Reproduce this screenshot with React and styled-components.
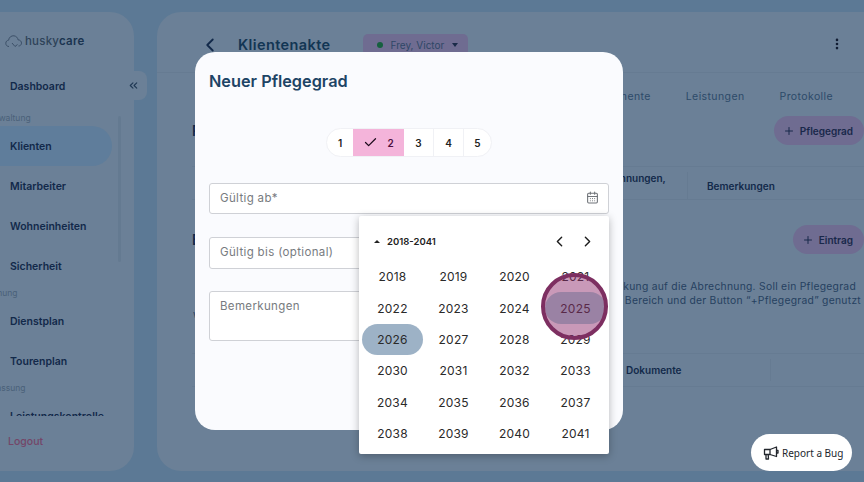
import React from "react";
import styled, { createGlobalStyle } from "styled-components";
import { CalendarDays, ChevronLeft, ChevronRight, ChevronsLeft, Check, Plus, EllipsisVertical } from "lucide-react";

const Global = createGlobalStyle`
  html, body { margin: 0; padding: 0; background: #5c7995; }
  body { font-family: "Inter", "Noto Sans", sans-serif; }
`;

const Page = styled.div`
  position: relative;
  width: 864px;
  height: 482px;
  overflow: hidden;
  display: flex;
  gap: 23px;
  padding: 12px 0 11px;
  box-sizing: border-box;
  background: #5c7995;
  color: #14304f;
`;

const Sidebar = styled.aside`
  flex: 0 0 158px;
  margin-left: -24px;
  position: relative;
  background: #6b8097;
  border-radius: 24px;
  display: flex;
  flex-direction: column;
`;

const Logo = styled.div`
  height: 54px;
  padding: 3px 0 0 29px;
  box-sizing: border-box;
  display: flex;
  align-items: center;
  gap: 2px;
  font-size: 11.5px;
  letter-spacing: 0.2px;
  font-weight: 500;
  color: #2e4359;
  & b {
    font-weight: 600;
    color: #1a3450;
  }
`;

const Nav = styled.nav`
  height: 350px;
  overflow: hidden;
`;

const SectionLabel = styled.div`
  height: 15px;
  margin-top: ${(p) => (p.$first ? "5px" : "0")};
  line-height: 15px;
  padding-left: ${(p) => p.$inset}px;
  font-size: 8.5px;
  color: #4a6079;
  white-space: nowrap;
`;

const NavItem = styled.div`
  height: 40px;
  width: 136px;
  padding-left: 34px;
  box-sizing: border-box;
  display: flex;
  align-items: center;
  font-size: 10.5px;
  font-weight: 600;
  color: #12294a;
  border-radius: 0 20px 20px 0;
  background: ${(p) => (p.$active ? "#5f7d9b" : "transparent")};
`;

const Logout = styled.div`
  margin-top: 19px;
  padding-left: 32px;
  font-size: 10.5px;
  font-weight: 500;
  color: #744668;
`;

const ScrollThumb = styled.div`
  position: absolute;
  left: 142px;
  top: 104px;
  width: 3px;
  height: 146px;
  background: #647a91;
  border-radius: 2px;
`;

const Collapse = styled.div`
  position: absolute;
  left: 144px;
  top: 59px;
  width: 27px;
  height: 29px;
  border-radius: 0 8px 8px 0;
  background: #6b8097;
  display: flex;
  align-items: center;
  justify-content: center;
  color: #1f3753;
`;

const Main = styled.main`
  flex: 0 0 760px;
  background: #6b8097;
  border-radius: 24px;
  padding-left: 35px;
  box-sizing: border-box;
`;

const Content = styled.div`
  width: 672px;
`;

const TopBar = styled.header`
  height: 61px;
  margin-left: -35px;
  padding: 22px 20px 0 42px;
  box-sizing: border-box;
  display: flex;
  align-items: flex-start;
  border-bottom: 1px solid #667b92;
  width: 707px;
  color: #12294a;
`;

const BackIcon = styled.div`
  width: 39px;
  display: flex;
`;

const PageTitle = styled.h1`
  margin: 0 32px 0 0;
  font-size: 14.5px;
  letter-spacing: 0.4px;
  line-height: 22px;
  font-weight: 600;
  color: #123553;
`;

const ClientChip = styled.div`
  height: 22px;
  width: 105px;
  box-sizing: border-box;
  padding-left: 14px;
  display: flex;
  align-items: center;
  gap: 8px;
  background: #6f6c91;
  border-radius: 5px;
  font-size: 10px;
  color: #2e4766;
  & i {
    width: 6px;
    height: 6px;
    border-radius: 50%;
    background: #16603f;
  }
  & u {
    width: 0;
    height: 0;
    border: 3.5px solid transparent;
    border-top: 4px solid #1a2a48;
    border-bottom: 0;
  }
`;

const MoreIcon = styled.div`
  margin-left: auto;
  padding-top: 1px;
  color: #111d33;
`;

const Tabs = styled.div`
  height: 43px;
  display: flex;
  justify-content: flex-end;
  align-items: center;
  gap: 35px;
  padding: 3px 31px 0 0;
  box-sizing: border-box;
  font-size: 10.5px;
  letter-spacing: 0.4px;
  color: #2d4a69;
`;

const SectionHead = styled.div`
  height: 29px;
  display: flex;
  align-items: center;
  justify-content: space-between;
  margin-bottom: ${(p) => p.$gap || 0}px;
`;

const SectionTitle = styled.h2`
  margin: 0;
  font-size: 14px;
  font-weight: 600;
  color: #12294a;
`;

const AddButton = styled.button`
  height: 29px;
  border: 0;
  border-radius: 15px;
  background: #6f6c91;
  color: #19284a;
  padding: 0 11px 0 9px;
  display: flex;
  align-items: center;
  gap: 5px;
  font: 600 10px "Inter", sans-serif;
`;

const TableHead = styled.div`
  display: grid;
  grid-template-columns: ${(p) => p.$cols};
  height: 34px;
  margin-bottom: ${(p) => p.$gap || 0}px;
  border-top: 1px solid #667b92;
  border-bottom: 1px solid #667b92;
  box-sizing: border-box;
`;

const HeadCell = styled.div`
  display: flex;
  align-items: center;
  padding-left: ${(p) => p.$pad || 0}px;
  font-size: 10px;
  line-height: 14px;
  font-weight: 600;
  color: #12294a;
  border-right: ${(p) => (p.$rule ? "1px solid #667b92" : "0")};
  margin: 5px 0;
`;

const TwoLines = styled.div`
  align-self: flex-start;
  margin-top: -1px;
`;

const Note = styled.div`
  margin: 25px 0 31px;
  width: 672px;
  font-size: 10.3px;
  line-height: 14.2px;
  letter-spacing: 0.28px;
  color: #264160;
  white-space: nowrap;
`;

const NoteLine = styled.div`
  text-align: ${(p) => (p.$end === undefined ? "left" : "right")};
  padding-right: ${(p) => p.$end || 0}px;
  padding-left: 1px;
`;

const Modal = styled.section`
  position: absolute;
  left: 195px;
  top: 52px;
  width: 428px;
  height: 378px;
  box-sizing: border-box;
  padding: 18px 14px 0;
  background: #fafbfe;
  border-radius: 20px;
`;

const ModalTitle = styled.h2`
  margin: 0;
  font-size: 16.3px;
  line-height: 22px;
  font-weight: 600;
  color: #1d4465;
`;

const Segments = styled.div`
  display: flex;
  justify-content: center;
  margin: 36px 0 26px;
`;

const SegmentGroup = styled.div`
  display: flex;
  height: 29px;
  box-sizing: border-box;
  border-radius: 15px;
  overflow: hidden;
  border: 1px solid #f0f1f5;
  background: #fff;
`;

const Segment = styled.div`
  width: ${(p) => p.$w}px;
  box-sizing: border-box;
  display: flex;
  align-items: center;
  justify-content: center;
  gap: 9px;
  font-size: 10px;
  font-weight: 600;
  color: ${(p) => (p.$on ? "#4d0f3d" : "#222")};
  background: ${(p) => (p.$on ? "#f4b4da" : "transparent")};
  border-left: ${(p) => (p.$rule ? "1px solid #f0f1f5" : "0")};
`;

const Field = styled.div`
  height: ${(p) => p.$h}px;
  margin-bottom: ${(p) => p.$gap}px;
  padding: ${(p) => (p.$area ? "7px" : "0")} 9px ${(p) => (p.$area ? "0" : "2px")} 10px;
  box-sizing: border-box;
  display: flex;
  align-items: ${(p) => (p.$area ? "flex-start" : "center")};
  justify-content: space-between;
  background: #fff;
  border: 1px solid #cfd1d6;
  border-radius: 3px;
  font-size: 11.5px;
  letter-spacing: 0.35px;
  color: #777b80;
`;

const Picker = styled.div`
  position: absolute;
  left: 164px;
  top: 164px;
  width: 250px;
  height: 238px;
  background: #fff;
  box-shadow: 0 2px 8px rgba(0, 0, 0, 0.28);
  border-radius: 2px;
  padding: 0 3px;
  box-sizing: border-box;
`;

const PickerHead = styled.div`
  height: 45px;
  padding: 5px 10px 0 12px;
  box-sizing: border-box;
  display: flex;
  align-items: center;
  gap: 7px;
  font-size: 9.5px;
  font-weight: 600;
  color: #222;
  & u {
    width: 0;
    height: 0;
    border: 3px solid transparent;
    border-bottom: 3px solid #222;
    border-top: 0;
  }
`;

const PickerNav = styled.div`
  margin-left: auto;
  display: flex;
  gap: 11px;
  color: #1d1d1d;
`;

const YearGrid = styled.div`
  display: grid;
  grid-template-columns: repeat(4, 61px);
  grid-auto-rows: 31.4px;
`;

const Year = styled.div`
  display: flex;
  align-items: center;
  justify-content: center;
  border-radius: 16px;
  font-size: 12px;
  letter-spacing: 0.2px;
  color: #2a2a2a;
  background: ${(p) => (p.$selected ? "#9db2c6" : p.$hover ? "#a6d4d8" : "transparent")};
`;

const ClickMark = styled.div`
  position: absolute;
  left: 182px;
  top: 57px;
  width: 67px;
  height: 67px;
  box-sizing: border-box;
  border-radius: 50%;
  border: 4px solid #7d2f61;
  background: rgba(142, 42, 106, 0.48);
`;

const BugButton = styled.div`
  position: absolute;
  left: 751px;
  top: 434px;
  width: 101px;
  height: 37px;
  box-sizing: border-box;
  padding-left: 12px;
  border-radius: 19px;
  background: #fff;
  display: flex;
  align-items: center;
  gap: 3px;
  font: 10px "Noto Sans", sans-serif;
  color: #22262c;
  white-space: nowrap;
`;

const years = Array.from({ length: 24 }, (_, i) => 2018 + i);

const App = () => (
  <Page>
    <Global />
    <Sidebar>
      <Logo>
        <svg width="18" height="16" viewBox="0 0 18 16" fill="none" stroke="#3c5068" strokeWidth="1">
          <path d="M4 13.500c-2 0-3.200-1.400-3.200-3.200S2 7.300 3.600 7.200C4 4.200 6.400 2.500 9 2.800c2.200.3 3.800 2 4 4 2 .1 3.500 1.500 3.500 3.300S15 13 13.500 13" />
          <path d="M7 10l3 3.500 2.500-2" />
        </svg>
        <span>
          husky<b>care</b>
        </span>
      </Logo>
      <Nav>
        <NavItem>Dashboard</NavItem>
        <SectionLabel $first $inset={9}>
          Verwaltung
        </SectionLabel>
        <NavItem $active>Klienten</NavItem>
        <NavItem>Mitarbeiter</NavItem>
        <NavItem>Wohneinheiten</NavItem>
        <NavItem>Sicherheit</NavItem>
        <SectionLabel $inset={9}>Planung</SectionLabel>
        <NavItem>Dienstplan</NavItem>
        <NavItem>Tourenplan</NavItem>
        <SectionLabel $inset={9}>Erfassung</SectionLabel>
        <NavItem>Leistungskontrolle</NavItem>
      </Nav>
      <Logout>Logout</Logout>
      <ScrollThumb />
      <Collapse>
        <ChevronsLeft size={13} />
      </Collapse>
    </Sidebar>

    <Main>
      <Content>
        <TopBar>
          <BackIcon>
            <ChevronLeft size={22} strokeWidth={2} />
          </BackIcon>
          <PageTitle>Klientenakte</PageTitle>
          <ClientChip>
            <i />
            Frey, Victor
            <u />
          </ClientChip>
          <MoreIcon>
            <EllipsisVertical size={14} strokeWidth={2.5} />
          </MoreIcon>
        </TopBar>
        <Tabs>
          <span>Dokumente</span>
          <span>Leistungen</span>
          <span>Protokolle</span>
        </Tabs>
        <SectionHead $gap={21}>
          <SectionTitle>Pflegegrade</SectionTitle>
          <AddButton>
            <Plus size={12} />
            Pflegegrad
          </AddButton>
        </SectionHead>
        <TableHead $cols="393px 103px 176px" $gap={25}>
          <HeadCell />
          <HeadCell $rule>
            <TwoLines>
              Anerkennungen,
              <br />
              Notiz
            </TwoLines>
          </HeadCell>
          <HeadCell $pad={19}>Bemerkungen</HeadCell>
        </TableHead>
        <SectionHead>
          <SectionTitle>Einträge</SectionTitle>
          <AddButton>
            <Plus size={12} />
            Eintrag
          </AddButton>
        </SectionHead>
        <Note>
          <NoteLine $end={8}>
            Die Angabe des Pflegegrades hat bei jedem Klienten immer eine direkte Auswirkung auf die Abrechnung. Soll ein Pflegegrad
          </NoteLine>
          <NoteLine $end={3}>
            für einen Klienten neu erfasst oder geändert werden, muss dafür immer der untere Bereich und der Button “+Pflegegrad” genutzt
          </NoteLine>
          <NoteLine>werden.</NoteLine>
        </Note>
        <TableHead $cols="416px 163px 93px">
          <HeadCell />
          <HeadCell $pad={18} $rule>
            Dokumente
          </HeadCell>
          <HeadCell />
        </TableHead>
      </Content>
    </Main>

    <Modal>
      <ModalTitle>Neuer Pflegegrad</ModalTitle>
      <Segments>
        <SegmentGroup>
          <Segment $w={26}>1</Segment>
          <Segment $w={51} $on>
            <Check size={15} color="#1d0b1c" strokeWidth={2} />2
          </Segment>
          <Segment $w={29}>3</Segment>
          <Segment $w={30} $rule>
            4
          </Segment>
          <Segment $w={28} $rule>
            5
          </Segment>
        </SegmentGroup>
      </Segments>
      <Field $h={31} $gap={23}>
        Gültig ab*
        <CalendarDays size={13} color="#6f7378" />
      </Field>
      <Field $h={32} $gap={22}>
        Gültig bis (optional)
      </Field>
      <Field $h={50} $gap={0} $area>
        Bemerkungen
      </Field>
      <Picker>
        <PickerHead>
          <u />
          2018-2041
          <PickerNav>
            <ChevronLeft size={17} />
            <ChevronRight size={17} />
          </PickerNav>
        </PickerHead>
        <YearGrid>
          {years.map((y) => (
            <Year key={y} $selected={y === 2026} $hover={y === 2025}>
              {y}
            </Year>
          ))}
        </YearGrid>
        <ClickMark />
      </Picker>
    </Modal>

    <BugButton>
      <svg width="16" height="16" viewBox="0 0 16 16" fill="none" stroke="#22262c" strokeWidth="1.3" strokeLinejoin="round">
        <path d="M1.500 4.500h5.500v5H1.500z" />
        <path d="M7 4.500l6.500-2.500v9.500L7 9.500" />
        <path d="M3 9.500v4.500h2.500l-.3-4.500" />
        <path d="M13.500 5.500h1.500v2.500h-1.500" />
      </svg>
      Report a Bug
    </BugButton>
  </Page>
);

export default App;
